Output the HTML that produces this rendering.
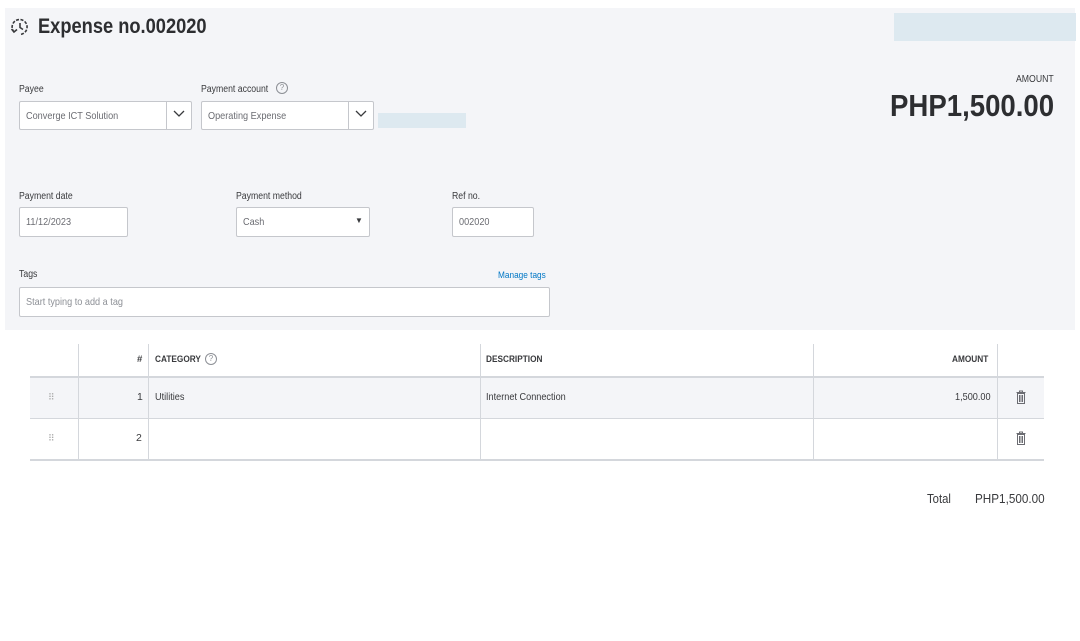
<!DOCTYPE html>
<html><head><style>
*{box-sizing:border-box;margin:0;padding:0}
body{width:1080px;height:641px;background:#fff;font-family:"Liberation Sans",sans-serif;position:relative;overflow:hidden;color:#393a3d}
.a{position:absolute}
.c{transform:scaleX(.87);transform-origin:left center;display:inline-block;white-space:nowrap}
.gray{left:5px;top:8px;width:1070px;height:322px;background:#f4f5f8}
.lbl{font-size:10px;color:#393a3d}
.inp{background:#fff;border:1px solid #c5c7cc;border-radius:2px;font-size:10.5px;color:#6b6c72;padding-left:6px;display:flex;align-items:center}
.line{background:#d4d7dc}
.hd{font-size:9.5px;font-weight:bold;color:#393a3d}
.tx{font-size:10.5px;color:#393a3d}
</style></head><body>
<div class="a gray"></div>
<div class="a" style="left:894px;top:13px;width:182px;height:28px;background:#dde9f0"></div>
<svg class="a" style="left:10px;top:17px" width="20" height="20" viewBox="0 0 20 20" fill="none" stroke="#393a3d" stroke-width="1.6"><path d="M4 15 A7.5 7.5 0 1 1 10 17.5" stroke-dasharray="3 1.5"/><path d="M10 6v4.5l3 2"/><path d="M1.5 12l2.5 3 3-2.5"/></svg>
<div class="a c" style="left:38px;top:15px;font-size:21px;font-weight:bold;color:#2d2e31">Expense no.002020</div>

<div class="a lbl c" style="left:19px;top:84px">Payee</div>
<div class="a inp" style="left:19px;top:101px;width:173px;height:29px"><span class="c">Converge ICT Solution</span></div>
<div class="a" style="left:166px;top:102px;width:1px;height:27px;background:#c5c7cc"></div>
<svg class="a" style="left:173px;top:110px" width="12" height="8"><path d="M1 1l5 5 5-5" fill="none" stroke="#393a3d" stroke-width="1.3"/></svg>
<div class="a lbl c" style="left:201px;top:84px">Payment account</div>
<div class="a" style="left:276px;top:82px;width:12px;height:12px;border:1px solid #8d9096;border-radius:50%;font-size:8px;text-align:center;line-height:10px;color:#8d9096">?</div>
<div class="a inp" style="left:201px;top:101px;width:173px;height:29px"><span class="c">Operating Expense</span></div>
<div class="a" style="left:348px;top:102px;width:1px;height:27px;background:#c5c7cc"></div>
<svg class="a" style="left:355px;top:110px" width="12" height="8"><path d="M1 1l5 5 5-5" fill="none" stroke="#393a3d" stroke-width="1.3"/></svg>
<div class="a" style="left:378px;top:113px;width:88px;height:15px;background:#dde9f0"></div>

<div class="a c" style="left:1016px;top:74px;font-size:10px;color:#393a3d">AMOUNT</div>
<div class="a c" style="left:890px;top:88px;font-size:31px;font-weight:bold;color:#2d2e31;transform:scaleX(.89)">PHP1,500.00</div>

<div class="a lbl c" style="left:19px;top:191px">Payment date</div>
<div class="a inp" style="left:19px;top:207px;width:109px;height:30px"><span class="c">11/12/2023</span></div>
<div class="a lbl c" style="left:236px;top:191px">Payment method</div>
<div class="a inp" style="left:236px;top:207px;width:134px;height:30px"><span class="c">Cash</span></div>
<div class="a" style="left:355px;top:216px;font-size:8px">▼</div>
<div class="a lbl c" style="left:452px;top:191px">Ref no.</div>
<div class="a inp" style="left:452px;top:207px;width:82px;height:30px"><span class="c">002020</span></div>

<div class="a lbl c" style="left:19px;top:269px">Tags</div>
<div class="a c" style="left:498px;top:270px;font-size:9.5px;color:#0077c5">Manage tags</div>
<div class="a inp" style="left:19px;top:287px;width:531px;height:30px;color:#8d9096"><span class="c">Start typing to add a tag</span></div>

<div class="a" style="left:30px;top:377px;width:1014px;height:41px;background:#f4f5f8"></div>
<div class="a line" style="left:30px;top:376px;width:1014px;height:2px"></div>
<div class="a line" style="left:30px;top:418px;width:1014px;height:1px"></div>
<div class="a line" style="left:30px;top:459px;width:1014px;height:2px"></div>
<div class="a line" style="left:78px;top:344px;width:1px;height:115px"></div>
<div class="a line" style="left:148px;top:344px;width:1px;height:115px"></div>
<div class="a line" style="left:480px;top:344px;width:1px;height:115px"></div>
<div class="a line" style="left:813px;top:344px;width:1px;height:115px"></div>
<div class="a line" style="left:997px;top:344px;width:1px;height:115px"></div>
<div class="a hd" style="left:137px;top:354px">#</div>
<div class="a hd c" style="left:155px;top:354px">CATEGORY</div>
<div class="a" style="left:205px;top:353px;width:12px;height:12px;border:1px solid #8d9096;border-radius:50%;font-size:8px;text-align:center;line-height:10px;color:#8d9096">?</div>
<div class="a hd c" style="left:486px;top:354px">DESCRIPTION</div>
<div class="a hd c" style="left:952px;top:354px">AMOUNT</div>
<div class="a" style="left:48px;top:392px;font-size:9px;color:#aaa">⠿</div>
<div class="a" style="left:48px;top:433px;font-size:9px;color:#aaa">⠿</div>
<div class="a tx" style="left:137px;top:391px">1</div>
<div class="a tx" style="left:136px;top:432px">2</div>
<div class="a tx c" style="left:155px;top:391px">Utilities</div>
<div class="a tx c" style="left:486px;top:391px">Internet Connection</div>
<div class="a tx c" style="left:955px;top:391px">1,500.00</div>
<svg class="a" style="left:1016px;top:390px" width="10" height="14"><path d="M0.5 2.5h9M3.5 2.5V1h3v1.5M1.5 3.5h7v10h-7zM3.5 5v7M5 5v7M6.5 5v7" fill="none" stroke="#6b6c72"/></svg>
<svg class="a" style="left:1016px;top:431px" width="10" height="14"><path d="M0.5 2.5h9M3.5 2.5V1h3v1.5M1.5 3.5h7v10h-7zM3.5 5v7M5 5v7M6.5 5v7" fill="none" stroke="#6b6c72"/></svg>

<div class="a c" style="left:927px;top:491px;font-size:13px">Total</div>
<div class="a c" style="left:975px;top:491px;font-size:13px;transform:scaleX(.9)">PHP1,500.00</div>
</body></html>
